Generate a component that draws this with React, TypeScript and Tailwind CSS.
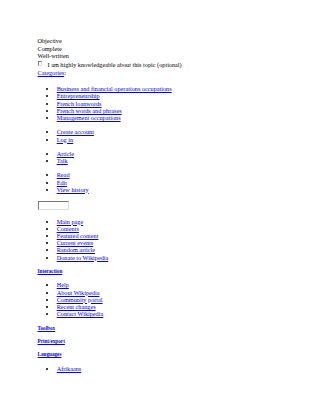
const link = 'text-[#0000ee] underline'

const Bullets = ({ items, className }: { items: string[]; className?: string }) => (
  <ul className={`list-disc pl-[19.2px] ${className ?? ''}`}>
    {items.map((item) => (
      <li key={item}>
        <a href="#" className={link}>
          {item}
        </a>
      </li>
    ))}
  </ul>
)

const Heading = ({ label, className }: { label: string; className?: string }) => (
  <h3 className={`text-[5.2px] leading-[6px] font-bold ${className ?? ''}`}>
    <a href="#" className={link}>
      {label}
    </a>
  </h3>
)

export default function App() {
  return (
    <div className="min-h-[414px] w-[320px] bg-white pl-[37.5px] pt-[37.4px] font-['Liberation_Serif',serif] text-[6.24px] leading-[7.2px] text-black">
      <div>Objective</div>
      <div>Complete</div>
      <div>Well-written</div>
      <div className="mt-[2px] flex items-start">
        <span className="block h-[4.5px] w-[4.5px] border border-t-[#777] border-l-[#777] border-b-[#ddd] border-r-[#ddd] bg-white" />
        <span className="ml-[5.5px] mt-[0.4px]">
          I am highly knowledgeable about this topic (optional)
        </span>
      </div>
      <div className="mt-[0.7px]">
        <a href="#" className={link}>
          Categories
        </a>
        :
      </div>

      <Bullets
        className="mt-[8.8px]"
        items={[
          'Business and financial operations occupations',
          'Entrepreneurship',
          'French loanwords',
          'French words and phrases',
          'Management occupations',
        ]}
      />
      <Bullets className="mt-[7px]" items={['Create account', 'Log in']} />
      <Bullets className="mt-[7px]" items={['Article', 'Talk']} />
      <Bullets className="mt-[7.2px]" items={['Read', 'Edit', 'View history']} />

      <div className="mt-[8px] h-[9px] w-[31px] border border-t-[#777] border-l-[#777] border-b-[#ddd] border-r-[#ddd] bg-white" />

      <Bullets
        className="mt-[7.6px]"
        items={[
          'Main page',
          'Contents',
          'Featured content',
          'Current events',
          'Random article',
          'Donate to Wikipedia',
        ]}
      />

      <Heading label="Interaction" className="mt-[7.3px]" />
      <Bullets
        className="mt-[7.4px]"
        items={['Help', 'About Wikipedia', 'Community portal', 'Recent changes', 'Contact Wikipedia']}
      />

      <Heading label="Toolbox" className="mt-[7.3px]" />
      <Heading label="Print/export" className="mt-[7.3px]" />
      <Heading label="Languages" className="mt-[7.3px]" />
      <Bullets className="mt-[7.8px]" items={['Afrikaans']} />
    </div>
  )
}
